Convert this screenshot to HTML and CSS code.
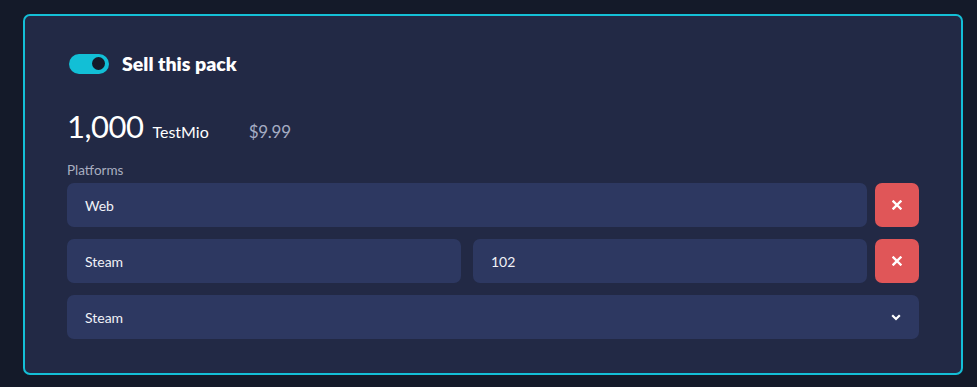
FILE: index.html
```html
<!DOCTYPE html>
<html lang="en">
<head>
    <meta charset="UTF-8">
    <meta name="viewport" content="width=device-width, initial-scale=1.0">
    <title>Pack</title>
    <link rel="stylesheet" href="styles.css">
</head>
<body>
    <div class="card">
        <div class="toggle-row">
            <span class="toggle"><span class="knob"></span></span>
            <span class="toggle-label">Sell this pack</span>
        </div>
        <div class="amount-row">
            <span class="amount">1,000</span>
            <span class="currency">TestMio</span>
            <span class="price">$9.99</span>
        </div>
        <div class="label">Platforms</div>
        <div class="rows">
            <div class="row">
                <div class="field">Web</div>
                <button class="remove" type="button">
                    <svg width="10" height="10" viewBox="0 0 10 10"><path d="M1.5 1.5L8.5 8.5M8.5 1.5L1.5 8.5" stroke="#fff" stroke-width="2.4" stroke-linecap="square"/></svg>
                </button>
            </div>
            <div class="row">
                <div class="split">
                    <div class="field">Steam</div>
                    <div class="field">102</div>
                </div>
                <button class="remove" type="button">
                    <svg width="10" height="10" viewBox="0 0 10 10"><path d="M1.5 1.5L8.5 8.5M8.5 1.5L1.5 8.5" stroke="#fff" stroke-width="2.4" stroke-linecap="square"/></svg>
                </button>
            </div>
            <div class="field select">
                <span>Steam</span>
                <svg width="10" height="7" viewBox="0 0 10 7"><path d="M1.2 1.2L5 5L8.8 1.2" fill="none" stroke="#fff" stroke-width="2.2"/></svg>
            </div>
        </div>
    </div>
</body>
</html>
```

FILE: styles.css
```css
body {
    margin: 0;
    padding: 14px 14px 12px 23px;
    background: #141a29;
    font-family: Lato, "Noto Sans", sans-serif;
    color: #fff;
}
.card {
    box-sizing: border-box;
    width: 940px;
    height: 361px;
    border: 2px solid #14bfd6;
    border-radius: 7px;
    background: #222945;
    padding: 36px 42px 0 42px;
}
.toggle-row {
    display: flex;
    align-items: center;
    gap: 13px;
    margin-left: 2px;
}
.toggle {
    width: 40px;
    height: 20px;
    border-radius: 10px;
    background: #12bfd6;
    display: flex;
    align-items: center;
    justify-content: flex-end;
    padding-right: 4px;
    box-sizing: border-box;
}
.knob {
    width: 13px;
    height: 13px;
    border-radius: 50%;
    background: #141a29;
}
.toggle-label {
    font-size: 19.5px;
    font-weight: 800;
}
.amount-row {
    display: flex;
    align-items: baseline;
    margin-top: 32px;
}
.amount {
    font-size: 31px;
    font-weight: 400;
    letter-spacing: -0.5px;
}
.currency {
    font-size: 16px;
    margin-left: 9px;
}
.price {
    font-size: 17px;
    color: #a6adc4;
    margin-left: 40px;
    letter-spacing: -0.3px;
}
.label {
    font-size: 13.5px;
    color: #a9aec0;
    margin-top: 17px;
    margin-bottom: 5px;
}
.rows {
    display: flex;
    flex-direction: column;
    gap: 12px;
}
.row {
    display: flex;
    gap: 8px;
}
.row > .field,
.split {
    flex: 1;
}
.split {
    display: flex;
    gap: 12px;
}
.split .field {
    flex: 1;
}
.field {
    box-sizing: border-box;
    height: 44px;
    border-radius: 7px;
    background: #2d3861;
    padding: 0 18px;
    display: flex;
    align-items: center;
    font-size: 14px;
    color: #f1f2f7;
}
.select {
    justify-content: space-between;
    padding-right: 18px;
}
.remove {
    width: 44px;
    height: 44px;
    border: 0;
    border-radius: 7px;
    background: #e05658;
    display: flex;
    align-items: center;
    justify-content: center;
    padding: 0;
}
```
